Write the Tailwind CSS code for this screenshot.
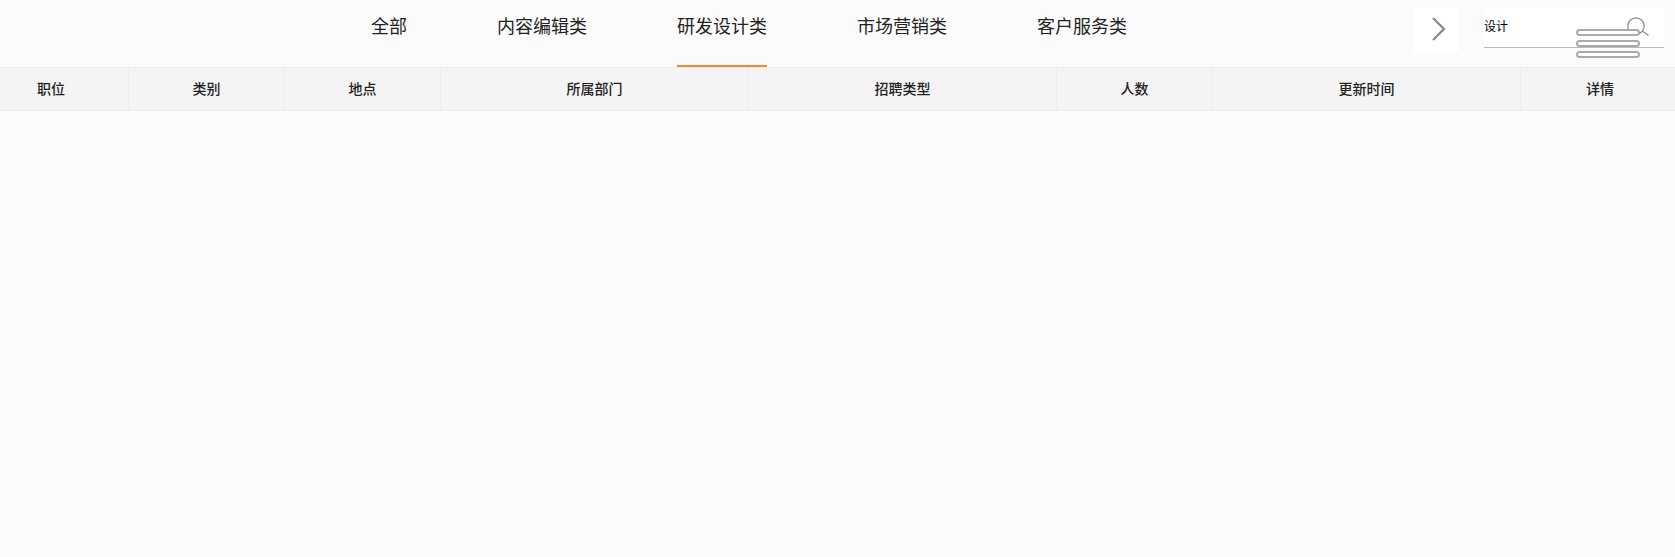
<!DOCTYPE html>
<html lang="zh-CN">
<head>
  <meta charset="UTF-8" />
  <title>招聘</title>
  <script src="https://cdn.jsdelivr.net/npm/@tailwindcss/browser@4"></script>
</head>
<body class="relative bg-[#fbfbfb] h-[557px] overflow-hidden font-['Liberation_Sans','Noto_Sans_CJK_SC',sans-serif] text-[#222]">
  <!-- tabs + search -->
  <div class="relative flex h-[67px] pl-[371px]">
    <div class="flex gap-[90px] text-[18px] leading-[54px]">
      <a class="block h-[67px]">全部</a>
      <a class="block h-[67px]">内容编辑类</a>
      <a class="block h-[67px] border-b-2 border-[#f28c28]">研发设计类</a>
      <a class="block h-[67px]">市场营销类</a>
      <a class="block h-[67px]">客户服务类</a>
    </div>
    <button class="absolute left-[1414px] top-[7px] w-[45px] h-[45px] bg-white flex items-center justify-center">
      <svg class="ml-[4px] mb-[2px]" width="16" height="26" viewBox="0 0 16 26" fill="none" stroke="#888" stroke-width="2.2"><path d="M2 2l11 11L2 24"/></svg>
    </button>
    <div class="absolute left-[1484px] top-[7px] w-[180px] h-[41px] bg-white border-b border-[#bbb] flex items-center justify-between">
      <span class="text-[12px] text-black">设计</span>
      <svg class="mr-[15px] mb-[1px]" width="22" height="19" viewBox="0 0 22 19" fill="none" stroke="#888" stroke-width="1.2"><circle cx="9" cy="9" r="8.2"/><path d="M15.5 14l6 4.5"/></svg>
    </div>
  </div>

  <!-- table head -->
  <div class="flex h-[44px] bg-[#f4f4f4] border-y border-[#ececec] text-[14px] font-medium text-[#222]">
    <div class="w-[129px] flex items-center pl-[37px] border-r border-[#ececec]">职位</div>
    <div class="w-[156px] flex items-center justify-center border-r border-[#ececec]">类别</div>
    <div class="w-[156px] flex items-center justify-center border-r border-[#ececec]">地点</div>
    <div class="w-[308px] flex items-center justify-center border-r border-[#ececec]">所属部门</div>
    <div class="w-[308px] flex items-center justify-center border-r border-[#ececec]">招聘类型</div>
    <div class="w-[156px] flex items-center justify-center border-r border-[#ececec]">人数</div>
    <div class="w-[308px] flex items-center justify-center border-r border-[#ececec]">更新时间</div>
    <div class="flex-1 flex items-center justify-center pl-[4px]">详情</div>
  </div>

  <!-- menu bars lying over the search box -->
  <div class="absolute left-[1576px] top-[29px] w-[64px] flex flex-col gap-[4px] blur-[0.4px]">
    <span class="block h-[7px] rounded-full bg-white border-2 border-[#aaa]"></span>
    <span class="block h-[7px] rounded-full bg-white border-2 border-[#aaa]"></span>
    <span class="block h-[7px] rounded-full bg-white border-2 border-[#aaa]"></span>
  </div>
</body>
</html>
